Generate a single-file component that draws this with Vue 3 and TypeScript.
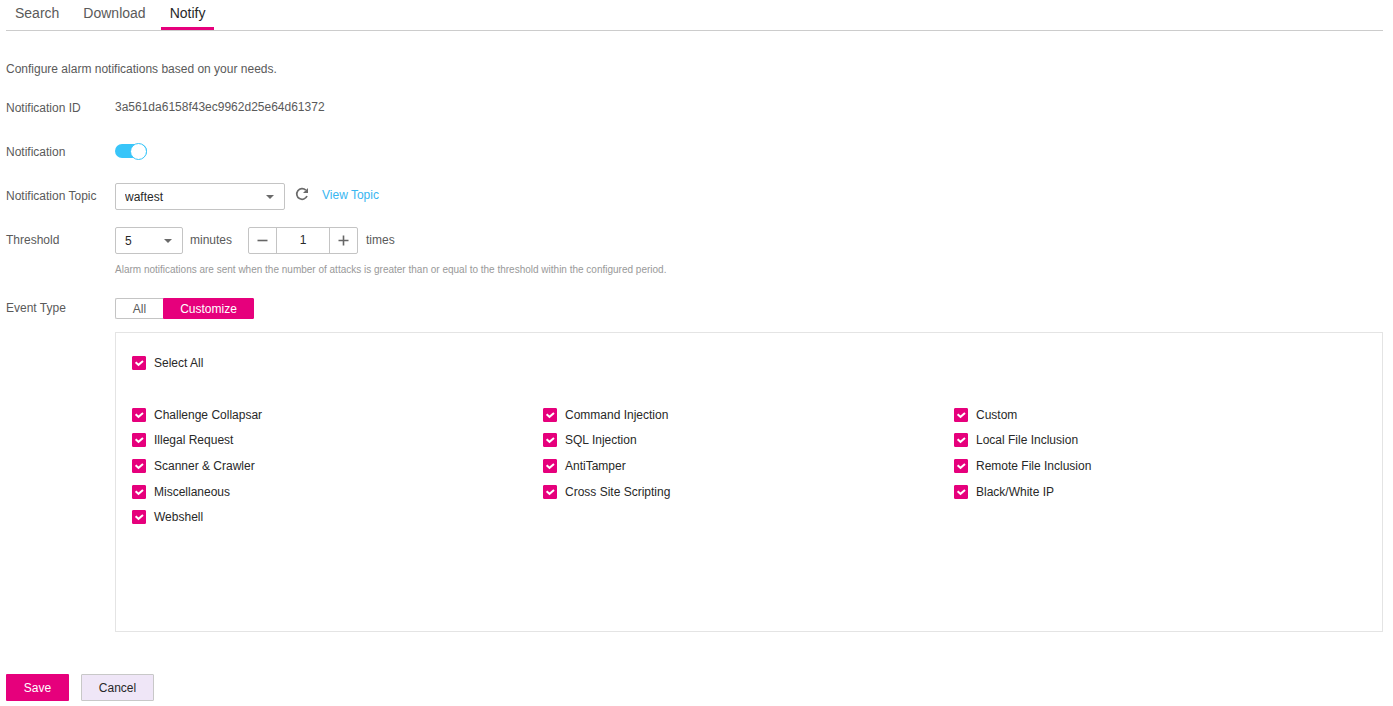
<script setup lang="ts">
import { computed, ref } from 'vue'

const tabs: string[] = ['Search', 'Download', 'Notify']
const activeTab = ref('Notify')
const enabled = ref(true)
const topic = ref('waftest')
const period = ref('5')
const times = ref(1)
const scope = ref<'All' | 'Customize'>('Customize')

interface EventType {
  name: string
  checked: boolean
}

const events = ref<EventType[]>(
  [
    'Challenge Collapsar', 'Command Injection', 'Custom',
    'Illegal Request', 'SQL Injection', 'Local File Inclusion',
    'Scanner & Crawler', 'AntiTamper', 'Remote File Inclusion',
    'Miscellaneous', 'Cross Site Scripting', 'Black/White IP',
    'Webshell',
  ].map((name) => ({ name, checked: true })),
)

const allChecked = computed<boolean>({
  get: () => events.value.every((e) => e.checked),
  set: (value) => events.value.forEach((e) => (e.checked = value)),
})

function step(delta: number): void {
  times.value = Math.max(1, Number(times.value) + delta)
}
</script>

<template>
  <main class="page">
    <nav class="tabs" aria-label="Sections">
      <button
        v-for="tab in tabs"
        :key="tab"
        type="button"
        class="tab"
        :class="{ active: tab === activeTab }"
        @click="activeTab = tab"
      >{{ tab }}</button>
    </nav>

    <p class="intro">Configure alarm notifications based on your needs.</p>

    <form class="form" @submit.prevent>
      <div class="row">
        <span class="label">Notification ID</span>
        <span class="value">3a561da6158f43ec9962d25e64d61372</span>
      </div>

      <div class="row">
        <label class="label" for="enabled">Notification</label>
        <div class="controls">
          <input id="enabled" v-model="enabled" class="switch" type="checkbox" role="switch" />
        </div>
      </div>

      <div class="row">
        <label class="label" for="topic">Notification Topic</label>
        <div class="controls">
          <span class="select wide">
            <select id="topic" v-model="topic">
              <option>waftest</option>
            </select>
            <svg class="caret" width="8" height="4" viewBox="0 0 8 4" aria-hidden="true"><path d="M0 0h8L4 4z" /></svg>
          </span>
          <button type="button" class="refresh" aria-label="Refresh">
            <svg width="14" height="14" viewBox="0 0 14 14" aria-hidden="true">
              <path class="arc" d="M10.8 3.2A5.3 5.3 0 1 0 12 9" />
              <path class="head" d="M13 1v5H8z" />
            </svg>
          </button>
          <a class="link" href="#">View Topic</a>
        </div>
      </div>

      <div class="row">
        <label class="label" for="period">Threshold</label>
        <div class="controls">
          <span class="select narrow">
            <select id="period" v-model="period">
              <option>5</option>
            </select>
            <svg class="caret" width="8" height="4" viewBox="0 0 8 4" aria-hidden="true"><path d="M0 0h8L4 4z" /></svg>
          </span>
          <span class="minutes">minutes</span>
          <span class="stepper">
            <button type="button" aria-label="Decrease" @click="step(-1)">
              <svg width="11" height="11" viewBox="0 0 11 11" aria-hidden="true"><path d="M0.5 5.5h10" /></svg>
            </button>
            <input v-model="times" type="text" aria-label="Number of times" />
            <button type="button" aria-label="Increase" @click="step(1)">
              <svg width="11" height="11" viewBox="0 0 11 11" aria-hidden="true"><path d="M0.5 5.5h10M5.5 0.5v10" /></svg>
            </button>
          </span>
          <span class="times">times</span>
        </div>
      </div>

      <p class="hint">Alarm notifications are sent when the number of attacks is greater than or equal to the threshold within the configured period.</p>

      <div class="row events">
        <span class="label">Event Type</span>
        <div class="body">
          <div class="segments" role="group" aria-label="Event Type">
            <button type="button" class="all" :class="{ on: scope === 'All' }" @click="scope = 'All'">All</button>
            <button type="button" class="custom" :class="{ on: scope === 'Customize' }" @click="scope = 'Customize'">Customize</button>
          </div>
          <div class="panel">
            <label class="check">
              <span class="box">
                <input v-model="allChecked" type="checkbox" />
                <svg width="14" height="14" viewBox="0 0 14 14" aria-hidden="true"><path d="M3.6 6.2l2.9 2.6L11 5" /></svg>
              </span>
              Select All
            </label>
            <div class="grid">
              <label v-for="event in events" :key="event.name" class="check">
                <span class="box">
                  <input v-model="event.checked" type="checkbox" />
                  <svg width="14" height="14" viewBox="0 0 14 14" aria-hidden="true"><path d="M3.6 6.2l2.9 2.6L11 5" /></svg>
                </span>
                {{ event.name }}
              </label>
            </div>
          </div>
        </div>
      </div>

      <div class="actions">
        <button type="submit" class="save">Save</button>
        <button type="button" class="cancel">Cancel</button>
      </div>
    </form>
  </main>
</template>

<style>
body {
  margin: 0;
  background: #fff;
}
</style>

<style scoped>
.page {
  padding: 0 10px 5px 6px;
  font-family: "Liberation Sans", Arial, sans-serif;
  font-size: 12px;
  line-height: 16px;
  color: #5a5a5a;
}
.page * {
  box-sizing: border-box;
}
button,
input,
select {
  margin: 0;
  padding: 0;
  border: 0;
  background: none;
  font: inherit;
  color: inherit;
  appearance: none;
}
button {
  cursor: pointer;
}
svg {
  display: block;
}

.tabs {
  display: flex;
  gap: 6px;
  border-bottom: 1px solid #ccc;
}
.tab {
  height: 30px;
  padding: 0 9px 2px;
  border-bottom: 3px solid transparent;
  font-size: 14px;
}
.tab.active {
  border-color: #e6007c;
  color: #282828;
}

.intro {
  margin: 30px 0 9px;
}

.row {
  display: flex;
  padding: 9px 0 8px;
  line-height: 27px;
}
.label {
  flex: 0 0 109px;
}
.value {
  line-height: 25px;
}
.controls {
  display: flex;
  align-items: center;
}

.switch {
  display: flex;
  align-items: center;
  width: 32px;
  height: 14px;
  margin-bottom: 3px;
  border-radius: 7px;
  background: #ccc;
}
.switch::before {
  content: "";
  box-sizing: border-box;
  flex: none;
  width: 17px;
  height: 17px;
  border: 1px solid #ccc;
  border-radius: 50%;
  background: #fff;
}
.switch:checked {
  justify-content: flex-end;
  background: #38c5f9;
}
.switch:checked::before {
  border-color: #38c5f9;
}

.select {
  display: grid;
  align-items: center;
}
.select > * {
  grid-area: 1 / 1;
}
.select select {
  width: 100%;
  height: 27px;
  padding: 0 24px 3px 9px;
  border: 1px solid #c4c4c4;
  border-radius: 2px;
  color: #282828;
}
.wide {
  width: 170px;
}
.narrow {
  width: 68px;
}
.caret {
  justify-self: end;
  margin-right: 11px;
  fill: #6a6a6a;
  pointer-events: none;
}
.refresh {
  margin: 0 13px 6px 10px;
}
.arc {
  fill: none;
  stroke: #6a6a6a;
  stroke-width: 1.7;
}
.head {
  fill: #6a6a6a;
}
.link {
  color: #38b6f1;
  text-decoration: none;
  line-height: 25px;
  align-self: flex-start;
}
.minutes {
  margin: 0 16px 0 7px;
}
.times {
  margin-left: 8px;
}
.stepper {
  display: flex;
  height: 27px;
  border: 1px solid #c4c4c4;
  border-radius: 2px;
}
.stepper button {
  display: grid;
  place-items: center;
  width: 27px;
}
.stepper input {
  width: 54px;
  border: solid #c4c4c4;
  border-width: 0 1px;
  text-align: center;
  color: #282828;
}
.stepper path {
  fill: none;
  stroke: #666;
  stroke-width: 1.6;
}

.hint {
  margin: 0 0 20px 109px;
  font-size: 10px;
  color: #999;
}

.events {
  padding: 0;
  line-height: 21px;
}
.body {
  flex: 1;
}
.segments {
  display: flex;
  margin-bottom: 13px;
}
.segments button {
  height: 21px;
  border: 1px solid #c4c4c4;
}
.all {
  width: 48px;
  border-radius: 2px 0 0 2px;
}
.custom {
  width: 91px;
  border-radius: 0 1px 1px 0;
}
.segments .all:not(.on) {
  border-right: 0;
}
.segments .on {
  border-color: #e6007c;
  background: #e6007c;
  color: #fff;
}

.panel {
  min-height: 300px;
  padding: 22px 17px 22px 16px;
  border: 1px solid #e4e4e4;
}
.check {
  display: flex;
  align-items: center;
  gap: 8px;
  line-height: 16px;
  color: #282828;
}
.box {
  display: grid;
}
.box > * {
  grid-area: 1 / 1;
}
.box input {
  width: 14px;
  height: 14px;
  border: 1px solid #c4c4c4;
  border-radius: 1px;
}
.box input:checked {
  border-color: #e6007c;
  background: #e6007c;
}
.box svg {
  pointer-events: none;
}
.box path {
  fill: none;
  stroke: #fff;
  stroke-width: 2;
}
.grid {
  display: grid;
  grid-template-columns: repeat(3, 1fr);
  grid-auto-rows: 1fr;
  min-height: 128px;
  margin-top: 31px;
}

.actions {
  display: flex;
  gap: 12px;
  margin-top: 42px;
}
.actions button {
  height: 27px;
  border-radius: 1px;
}
.actions .save {
  width: 63px;
  background: #e6007c;
  color: #fff;
}
.actions .cancel {
  width: 73px;
  border: 1px solid #c8c8c8;
  background: #efe6f7;
  color: #282828;
}
</style>
